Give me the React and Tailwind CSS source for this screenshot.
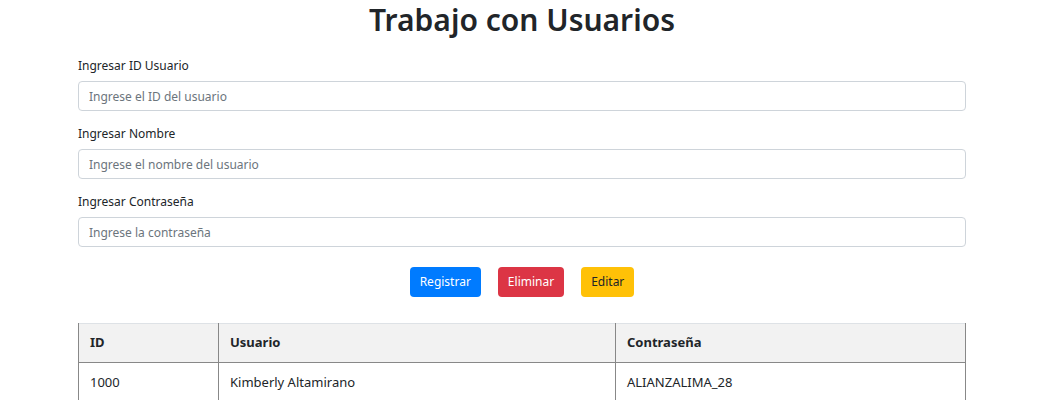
import { useState } from "react";

const fields = [
  { id: "id", label: "Ingresar ID Usuario", placeholder: "Ingrese el ID del usuario" },
  { id: "nombre", label: "Ingresar Nombre", placeholder: "Ingrese el nombre del usuario" },
  { id: "pass", label: "Ingresar Contraseña", placeholder: "Ingrese la contraseña" },
];

const usuarios = [{ id: 1000, nombre: "Kimberly Altamirano", pass: "ALIANZALIMA_28" }];

const App = () => {
  const [form, setForm] = useState({ id: "", nombre: "", pass: "" });

  return (
    <div
      className="min-h-screen bg-white text-[#212529] pr-[14px]"
      style={{ fontFamily: '"Noto Sans", "Open Sans", sans-serif' }}
    >
      <div className="w-[888px] mx-auto">
        <h1 className="text-center text-[30px] font-semibold leading-[40px] mb-[15px]">
          Trabajo con Usuarios
        </h1>

        {fields.map((f) => (
          <div key={f.id} className="mb-[12px]">
            <label className="block text-[12px] leading-[21px] mb-[5px]">{f.label}</label>
            <input
              value={form[f.id]}
              onChange={(e) => setForm({ ...form, [f.id]: e.target.value })}
              placeholder={f.placeholder}
              className="block w-full h-[30px] px-[10px] text-[12px] border border-[#ced4da] rounded-[4px] placeholder:text-[#6c757d] outline-none"
            />
          </div>
        ))}

        <div className="flex justify-center gap-[17px] mt-[20px]">
          <button className="h-[30px] px-[10px] rounded-[4px] bg-[#007bff] text-white text-[12px]">
            Registrar
          </button>
          <button className="h-[30px] px-[10px] rounded-[4px] bg-[#dc3545] text-white text-[12px]">
            Eliminar
          </button>
          <button className="h-[30px] px-[10px] rounded-[4px] bg-[#ffc107] text-[#212529] text-[12px]">
            Editar
          </button>
        </div>

        <table className="w-full mt-[26px] border-collapse text-[13px]">
          <thead>
            <tr className="bg-[#f2f2f2] border-t border-t-[#dee2e6]">
              <th className="w-[140px] h-[39px] px-[11px] text-left font-bold border-l border-r border-b border-[#888]">ID</th>
              <th className="w-[397px] h-[39px] px-[11px] text-left font-bold border-r border-b border-[#888]">Usuario</th>
              <th className="h-[39px] px-[11px] text-left font-bold border-r border-b border-[#888]">Contraseña</th>
            </tr>
          </thead>
          <tbody>
            {usuarios.map((u) => (
              <tr key={u.id}>
                <td className="h-[40px] px-[11px] border-l border-r border-[#888]">{u.id}</td>
                <td className="h-[40px] px-[11px] border-r border-[#888]">{u.nombre}</td>
                <td className="h-[40px] px-[11px] border-r border-[#888]">{u.pass}</td>
              </tr>
            ))}
          </tbody>
        </table>
      </div>
    </div>
  );
};

export default App;
